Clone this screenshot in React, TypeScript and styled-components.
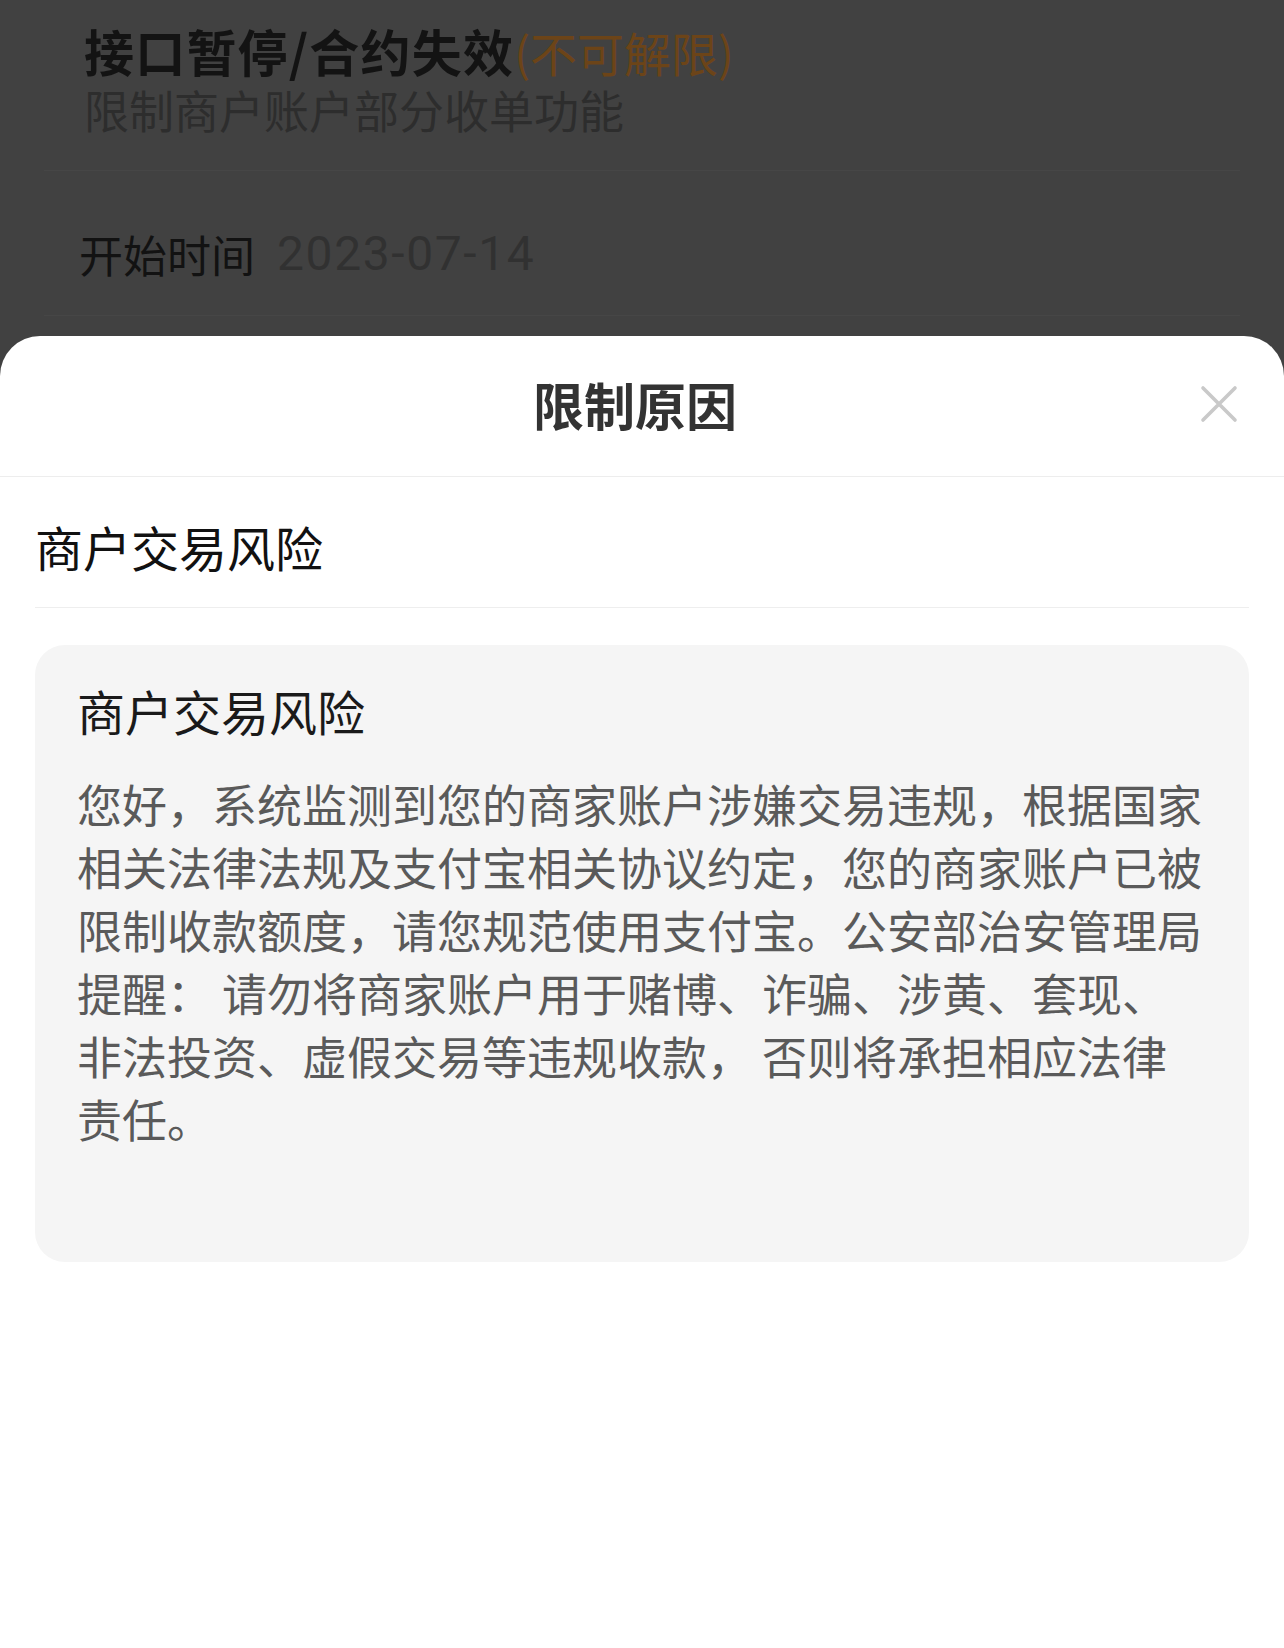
import React from "react";
import styled, { createGlobalStyle } from "styled-components";

const GlobalStyle = createGlobalStyle`
  html, body {
    margin: 0;
    padding: 0;
    background: #414141;
  }
  body {
    font-family: "Noto Sans CJK SC", "Noto Sans", sans-serif;
    -webkit-font-smoothing: antialiased;
  }
`;

const Screen = styled.div`
  width: 1284px;
  min-height: 1648px;
  display: flex;
  flex-direction: column;
  background: #414141;
`;

/* the page behind the sheet, already dimmed by the mask */
const Backdrop = styled.div`
  height: 336px;
  overflow: hidden;
  padding: 20px 44px 0 44px;
  box-sizing: border-box;
`;

const BackTitle = styled.div`
  padding-left: 40px;
  font-size: 50px;
  line-height: 60px;
  font-weight: 700;
  color: #131313;
  white-space: nowrap;
  letter-spacing: 1.2px;
`;

const Tag = styled.span`
  font-size: 47px;
  font-weight: 400;
  color: #6c4418;
  letter-spacing: 0;
`;

const BackSub = styled.div`
  padding-left: 40px;
  font-size: 45px;
  line-height: 56px;
  color: #2d2d2d;
`;

const BackRow = styled.div<{ $first?: boolean }>`
  border-top: 1px solid #464646;
  margin-top: ${(p) => (p.$first ? "32px" : "0")};
  padding: ${(p) => (p.$first ? "55px 0 33px 35px" : "22px 0 0 35px")};
  display: flex;
  align-items: center;
  gap: 22px;
  font-size: 44px;
  line-height: 56px;
`;

const Label = styled.span`
  color: #121212;
`;

const DateText = styled.span`
  font-family: Roboto, "Liberation Sans", sans-serif;
  font-size: 48px;
  letter-spacing: 1.6px;
  color: #313131;
`;

const Sheet = styled.div`
  flex: 1;
  background: #ffffff;
  border-radius: 40px 40px 0 0;
  display: flex;
  flex-direction: column;
`;

const SheetHeader = styled.div`
  height: 141px;
  border-bottom: 1px solid #ededed;
  display: grid;
  grid-template-columns: 1fr auto 1fr;
  align-items: center;
  padding: 0 46px 4px 46px;
  box-sizing: border-box;
`;

const SheetTitle = styled.div`
  grid-column: 2;
  margin-right: 14px;
  font-size: 51px;
  line-height: 60px;
  font-weight: 700;
  color: #333333;
`;

const CloseButton = styled.button`
  grid-column: 3;
  justify-self: end;
  width: 38px;
  height: 38px;
  padding: 0;
  border: none;
  background: transparent;
  display: flex;
  align-items: center;
  justify-content: center;
  cursor: pointer;
`;

const ReasonRow = styled.div`
  margin: 0 35px;
  padding: 38px 0 30px 0;
  border-bottom: 1px solid #eeeeee;
  font-size: 48px;
  line-height: 62px;
  color: #111111;
`;

const DetailCard = styled.div`
  margin: 37px 35px 0 35px;
  padding: 34px 40px 112px 42px;
  background: #f5f5f5;
  border-radius: 30px;
`;

const DetailTitle = styled.div`
  font-size: 48px;
  line-height: 63px;
  color: #1a1a1a;
`;

const DetailText = styled.p`
  margin: 30px 0 0 0;
  font-size: 45px;
  line-height: 63px;
  color: #5a5a5a;
  text-spacing-trim: space-all;
`;

const TextLine = styled.span`
  display: block;
  white-space: pre;
`;

const CloseIcon = () => (
  <svg width="38" height="38" viewBox="0 0 38 38" fill="none">
    <path d="M3 3L35 35M35 3L3 35" stroke="#c9c9c9" strokeWidth="3.6" strokeLinecap="round" />
  </svg>
);

const messageLines = [
  "您好，系统监测到您的商家账户涉嫌交易违规，根据国家",
  "相关法律法规及支付宝相关协议约定，您的商家账户已被",
  "限制收款额度，请您规范使用支付宝。公安部治安管理局",
  "提醒： 请勿将商家账户用于赌博、诈骗、涉黄、套现、",
  "非法投资、虚假交易等违规收款， 否则将承担相应法律",
  "责任。",
];

export default function App() {
  return (
    <>
      <GlobalStyle />
      <Screen>
        <Backdrop>
          <BackTitle>
            接口暂停/合约失效<Tag>(不可解限)</Tag>
          </BackTitle>
          <BackSub>限制商户账户部分收单功能</BackSub>
          <BackRow $first>
            <Label>开始时间</Label>
            <DateText>2023-07-14</DateText>
          </BackRow>
          <BackRow />
        </Backdrop>
        <Sheet>
          <SheetHeader>
            <SheetTitle>限制原因</SheetTitle>
            <CloseButton aria-label="关闭">
              <CloseIcon />
            </CloseButton>
          </SheetHeader>
          <ReasonRow>商户交易风险</ReasonRow>
          <DetailCard>
            <DetailTitle>商户交易风险</DetailTitle>
            <DetailText>
              {messageLines.map((line, i) => (
                <TextLine key={i}>{line}</TextLine>
              ))}
            </DetailText>
          </DetailCard>
        </Sheet>
      </Screen>
    </>
  );
}
